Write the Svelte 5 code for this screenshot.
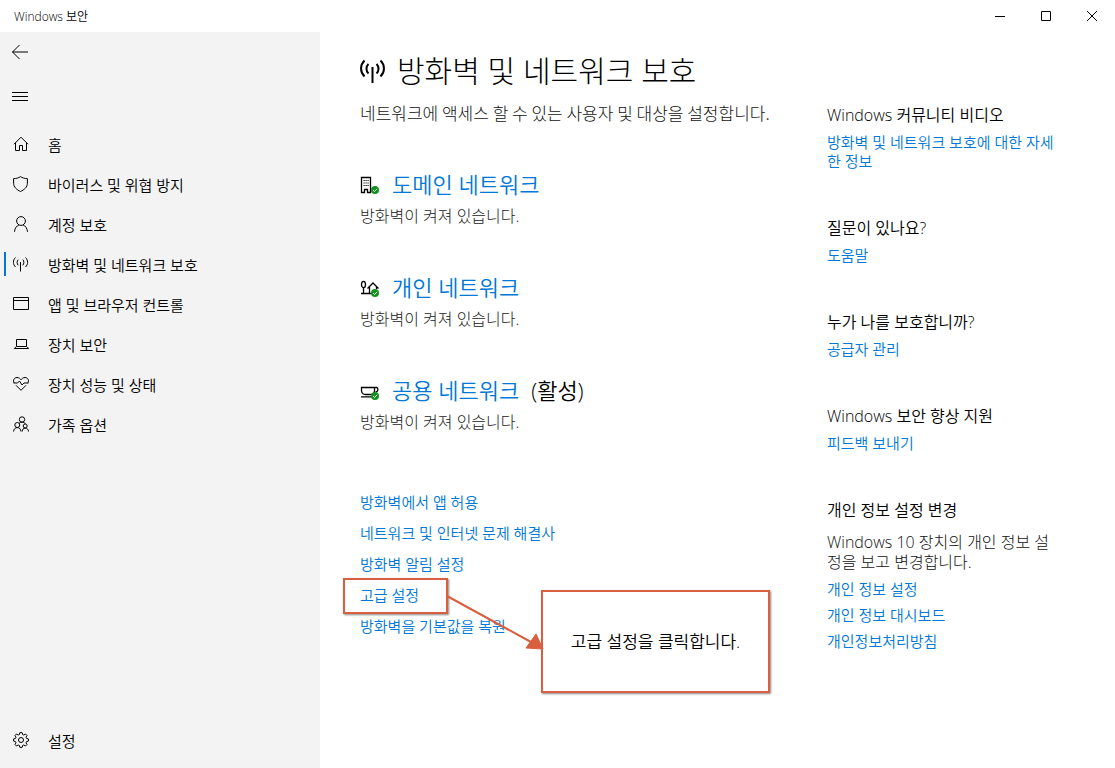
<script>
    const navItems = [
        { icon: 'home', label: '홈' },
        { icon: 'shield', label: '바이러스 및 위협 방지' },
        { icon: 'account', label: '계정 보호' },
        { icon: 'signal', label: '방화벽 및 네트워크 보호' },
        { icon: 'app', label: '앱 및 브라우저 컨트롤' },
        { icon: 'laptop', label: '장치 보안' },
        { icon: 'heart', label: '장치 성능 및 상태' },
        { icon: 'family', label: '가족 옵션' }
    ];

    const networks = [
        { icon: 'domain', name: '도메인 네트워크', current: false },
        { icon: 'private', name: '개인 네트워크', current: false },
        { icon: 'public', name: '공용 네트워크', current: true }
    ];

    const firewallLinks = [
        '방화벽에서 앱 허용',
        '네트워크 및 인터넷 문제 해결사',
        '방화벽 알림 설정',
        '고급 설정',
        '방화벽을 기본값을 복원'
    ];

    const helpSections = [
        { title: 'Windows 커뮤니티 비디오', links: ['방화벽 및 네트워크 보호에 대한 자세한 정보'] },
        { title: '질문이 있나요?', links: ['도움말'] },
        { title: '누가 나를 보호합니까?', links: ['공급자 관리'] },
        { title: 'Windows 보안 향상 지원', links: ['피드백 보내기'] },
        {
            title: '개인 정보 설정 변경',
            text: 'Windows 10 장치의 개인 정보 설정을 보고 변경합니다.',
            links: ['개인 정보 설정', '개인 정보 대시보드', '개인정보처리방침']
        }
    ];

    let activeItem = $state('signal');
    const highlighted = '고급 설정';
</script>

{#snippet icon(name)}
    <svg class="icon" viewBox="0 0 16 16" aria-hidden="true">
        {#if name === 'home'}
            <path d="M1 8.200 8 1.200l7 7M2.500 7v7.500h4v-5h3v5h4V7" />
        {:else if name === 'shield'}
            <path d="M7.500.6C5.800 1.900 3.200 2.600.6 2.600v4.600c0 4 3.200 6.600 6.900 8.300 3.700-1.700 6.900-4.300 6.900-8.300V2.600C11.800 2.600 9.200 1.900 7.500.6z" />
        {:else if name === 'account'}
            <circle cx="8" cy="5" r="4.400" />
            <path d="M1.500 15.800c.3-3.700 2.200-6 4.500-6.900M14.500 15.800c-.3-3.700-2.200-6-4.500-6.900" />
        {:else if name === 'signal'}
            <path d="M7.500 6v9.500M5.200 3.600c-1.400 1.500-1.400 4.200 0 5.700M9.800 3.600c1.400 1.500 1.400 4.200 0 5.700M2.500 1.500C-.3 4.300-.3 8.300 2.500 11M12.500 1.500c2.800 2.800 2.800 6.800 0 9.500" />
        {:else if name === 'app'}
            <path d="M.5 1.500h15v12H.5zM.5 4.500h15" />
        {:else if name === 'laptop'}
            <path d="M3.500 3.500h10v7h-10zM3.300 10.500l-2 2h14.400l-2-2" />
        {:else if name === 'heart'}
            <path d="M1.300 7C-.5 4.500 1.200 1.500 4 1.500c2 0 3.200 1.200 4 2.300.8-1.100 2-2.300 4-2.300 2.800 0 4.500 3 2.700 5.500M3 9.300l5 5 5-5M.5 7h4l2-2 2.500 4 2-2h4.500" />
        {:else if name === 'family'}
            <circle cx="9" cy="3.500" r="2.700" />
            <circle cx="4.300" cy="9" r="2.500" />
            <circle cx="12.200" cy="10" r="2" />
            <path d="M.6 15.500c0-2.300 1.700-3.900 3.700-3.900s3.700 1.600 3.700 3.900M9.200 15.500c0-2 1.200-3.400 3-3.400s3.300 1.400 3.300 3.400M6 7.500c1.500-1.800 5-1.800 6.500.3" />
        {:else if name === 'settings'}
            <circle cx="8" cy="8" r="2.500" />
            <path d="M6.900.6h2.200l.5 1.900 1.200.5 1.700-1 1.500 1.500-1 1.700.5 1.200 1.900.5v2.200l-1.900.5-.5 1.200 1 1.700-1.500 1.500-1.700-1-1.200.5-.5 1.900H6.900l-.5-1.900-1.200-.5-1.700 1L2 12.500l1-1.700-.5-1.200-1.900-.5V6.900l1.900-.5L3 5.200l-1-1.700L3.500 2l1.700 1 1.200-.5z" />
        {/if}
    </svg>
{/snippet}

{#snippet networkIcon(name)}
    <svg class="network-icon" viewBox="0 0 20 20" aria-hidden="true">
        {#if name === 'domain'}
            <path d="M1.500 3.500h9v15h-3v-3h-3v3h-3z" stroke-width="1.300" />
            <path d="M3.500 6.500h1.200M5.500 6.500h1.200M7.500 6.500h1.200M3.500 9h1.200M5.500 9h1.200M7.500 9h1.200M3.500 11.500h1.200M5.500 11.500h1.200M7.500 11.500h1.200" />
        {:else if name === 'private'}
            <ellipse cx="3.500" cy="7.500" rx="2" ry="3.200" stroke-width="1.300" />
            <path d="M3.500 10.500v6M1 16.500h11M7.500 11.500l5.500-5.500 5.500 5.500M9.500 10v6.500M16.500 10v2" stroke-width="1.300" />
        {:else}
            <path d="M1.500 7.500h13v3c0 2-1.200 4-3.500 4H5.500C3 14.500 1.500 12.500 1.500 10.500zM14.500 7.500h2c2 0 2 4.500-1 4.500M1 16.800h11" stroke-width="1.300" />
        {/if}
        <circle class="badge" cx="15" cy="16" r="4" />
        <path class="tick" d="M13 16l1.500 1.500 2.700-2.700" />
    </svg>
{/snippet}

<div class="window">
    <header class="titlebar">
        <span>Windows 보안</span>
        <div class="window-buttons">
            <button aria-label="최소화">
                <svg viewBox="0 0 10 10"><path d="M0 5.500h10" /></svg>
            </button>
            <button aria-label="최대화">
                <svg viewBox="0 0 10 10"><path d="M.5.5h9v9h-9z" /></svg>
            </button>
            <button aria-label="닫기">
                <svg viewBox="0 0 10 10"><path d="M0 0l10 10M10 0L0 10" /></svg>
            </button>
        </div>
    </header>

    <div class="body">
        <div class="sidebar">
            <button class="tool" aria-label="뒤로">
                <svg class="icon" viewBox="0 0 16 16"><path d="M.5 8H16M7.500 1 .5 8l7 7" /></svg>
            </button>
            <button class="tool" aria-label="메뉴">
                <svg class="icon" viewBox="0 0 16 16"><path d="M0 4.500h16M0 8.500h16M0 12.500h16" /></svg>
            </button>
            <nav>
                {#each navItems as item (item.icon)}
                    <button
                        class="nav-item"
                        class:active={item.icon === activeItem}
                        onclick={() => (activeItem = item.icon)}
                    >
                        {@render icon(item.icon)}
                        <span>{item.label}</span>
                    </button>
                {/each}
            </nav>
            <button class="nav-item settings">
                {@render icon('settings')}
                <span>설정</span>
            </button>
        </div>

        <main>
            <h1>
                <svg class="title-icon" viewBox="0 0 26 26" aria-hidden="true">
                    <path d="M12.500 9v16M8.500 6c-2.700 2.500-2.700 7 0 9.500M16.500 6c2.700 2.500 2.700 7 0 9.500M4.500 2.500C-.1 7-.1 14 4.500 18.500M20.500 2.500c4.600 4.500 4.600 11.500 0 16" />
                </svg>
                방화벽 및 네트워크 보호
            </h1>
            <p class="subtitle">네트워크에 액세스 할 수 있는 사용자 및 대상을 설정합니다.</p>

            {#each networks as network (network.name)}
                <section class="network">
                    <h2>
                        {@render networkIcon(network.icon)}
                        <a href="#network">{network.name}</a>
                        {#if network.current}
                            <span>(활성)</span>
                        {/if}
                    </h2>
                    <p>방화벽이 켜져 있습니다.</p>
                </section>
            {/each}

            <ul class="firewall-links">
                {#each firewallLinks as link (link)}
                    <li>
                        <a href="#firewall">{link}</a>
                        {#if link === highlighted}
                            <div class="highlight"></div>
                            <div class="callout">고급 설정을 클릭합니다.</div>
                            <svg class="arrow" viewBox="0 0 98 60" aria-hidden="true">
                                <path d="M1 2l84 46" />
                                <path class="head" d="M90 40l7 15-17-1z" />
                            </svg>
                        {/if}
                    </li>
                {/each}
            </ul>
        </main>

        <aside>
            {#each helpSections as section (section.title)}
                <section>
                    <h3>{section.title}</h3>
                    {#if section.text}
                        <p>{section.text}</p>
                    {/if}
                    <div class="help-links">
                        {#each section.links as link (link)}
                            <a href="#help">{link}</a>
                        {/each}
                    </div>
                </section>
            {/each}
        </aside>
    </div>
</div>

<style>
    :global(body) {
        margin: 0;
        background: #fff;
    }

    .window {
        min-height: 100vh;
        display: flex;
        flex-direction: column;
        font-family: "Open Sans", "Noto Sans CJK KR", sans-serif;
        font-size: 16px;
        font-weight: 350;
        color: #000;
    }

    h1, h2, h3, p, ul {
        margin: 0;
        padding: 0;
        font-weight: 350;
    }

    a {
        color: #0078d7;
        text-decoration: none;
    }

    button {
        border: none;
        background: none;
        padding: 0;
        font: inherit;
        color: inherit;
    }

    svg {
        fill: none;
        stroke: #000;
        flex-shrink: 0;
    }

    .titlebar {
        height: 32px;
        display: flex;
        align-items: center;
        justify-content: space-between;
        padding-left: 14px;
        font-size: 12px;
    }

    .window-buttons {
        display: flex;
    }

    .window-buttons button {
        width: 46px;
        height: 32px;
        display: flex;
        align-items: center;
        justify-content: center;
    }

    .window-buttons svg {
        width: 10px;
        height: 10px;
    }

    .body {
        flex: 1;
        display: grid;
        grid-template-columns: 320px minmax(0, 1fr) 234px;
        padding-right: 54px;
    }

    .sidebar {
        display: flex;
        flex-direction: column;
        background: #f3f3f3;
        padding-bottom: 8px;
    }

    .icon {
        width: 16px;
        height: 16px;
    }

    .tool {
        display: flex;
        align-items: center;
        height: 40px;
        padding-left: 12px;
    }

    .tool + .tool {
        margin-top: 4px;
    }

    nav {
        margin-top: 8px;
    }

    .nav-item {
        display: flex;
        align-items: center;
        gap: 19px;
        width: 100%;
        height: 40px;
        padding-left: 13px;
        font-size: 15px;
        line-height: 20px;
        text-align: left;
        position: relative;
    }

    .nav-item span {
        padding-top: 2px;
    }

    .nav-item.active::before {
        content: "";
        position: absolute;
        left: 4px;
        top: 8px;
        width: 2px;
        height: 24px;
        background: #0078d7;
    }

    .settings {
        margin-top: auto;
    }

    main {
        padding: 19px 0 40px 40px;
    }

    h1 {
        display: flex;
        align-items: center;
        gap: 11px;
        font-size: 30px;
        font-weight: 300;
        line-height: 40px;
    }

    .title-icon {
        width: 26px;
        height: 26px;
        stroke-width: 2;
    }

    .subtitle {
        margin: 10px 0 44px;
        font-family: "Noto Sans CJK KR", sans-serif;
        font-size: 17px;
        font-weight: 300;
        line-height: 24px;
        color: #111;
    }

    .network {
        margin-bottom: 44px;
    }

    h2 {
        display: flex;
        align-items: center;
        gap: 12px;
        font-size: 22px;
        line-height: 30px;
    }

    .network-icon {
        width: 20px;
        height: 20px;
    }

    .badge {
        fill: #10931d;
        stroke: none;
    }

    .tick {
        stroke: #fff;
    }

    .network p {
        margin-top: 5px;
        line-height: 24px;
        font-weight: 300;
        color: #222;
    }

    .firewall-links {
        margin-top: 53px;
        list-style: none;
        font-size: 15px;
        line-height: 31px;
    }

    .firewall-links li {
        position: relative;
        width: max-content;
    }

    /* annotation lies over the list, anchored to the highlighted link */
    .highlight, .callout {
        position: absolute;
        z-index: 1;
        box-sizing: border-box;
        border: 2px solid #d9603f;
        box-shadow: 1px 1px 2px #888;
    }

    .highlight {
        left: -17px;
        top: -2px;
        width: 105px;
        height: 36px;
        pointer-events: none;
    }

    .callout {
        left: 181px;
        top: 10px;
        width: 229px;
        height: 103px;
        display: flex;
        align-items: center;
        justify-content: center;
        background: #fff;
        font-size: 17px;
        white-space: nowrap;
    }

    .arrow {
        position: absolute;
        z-index: 2;
        left: 86px;
        top: 14px;
        width: 98px;
        height: 60px;
        stroke: #d9603f;
        stroke-width: 2;
        pointer-events: none;
    }

    .head {
        fill: #d9603f;
        stroke-width: 1;
    }

    aside {
        display: flex;
        flex-direction: column;
        gap: 45px;
        padding-top: 71px;
        font-size: 16px;
    }

    h3 {
        font-size: 16px;
        line-height: 24px;
    }

    aside p {
        margin: 10px 0 8px;
        line-height: 20px;
        font-weight: 300;
        color: #111;
        word-break: break-all;
    }

    .help-links {
        display: flex;
        flex-direction: column;
        align-items: flex-start;
        gap: 7px;
        margin-top: 6px;
        font-size: 15px;
        line-height: 19px;
    }
</style>
